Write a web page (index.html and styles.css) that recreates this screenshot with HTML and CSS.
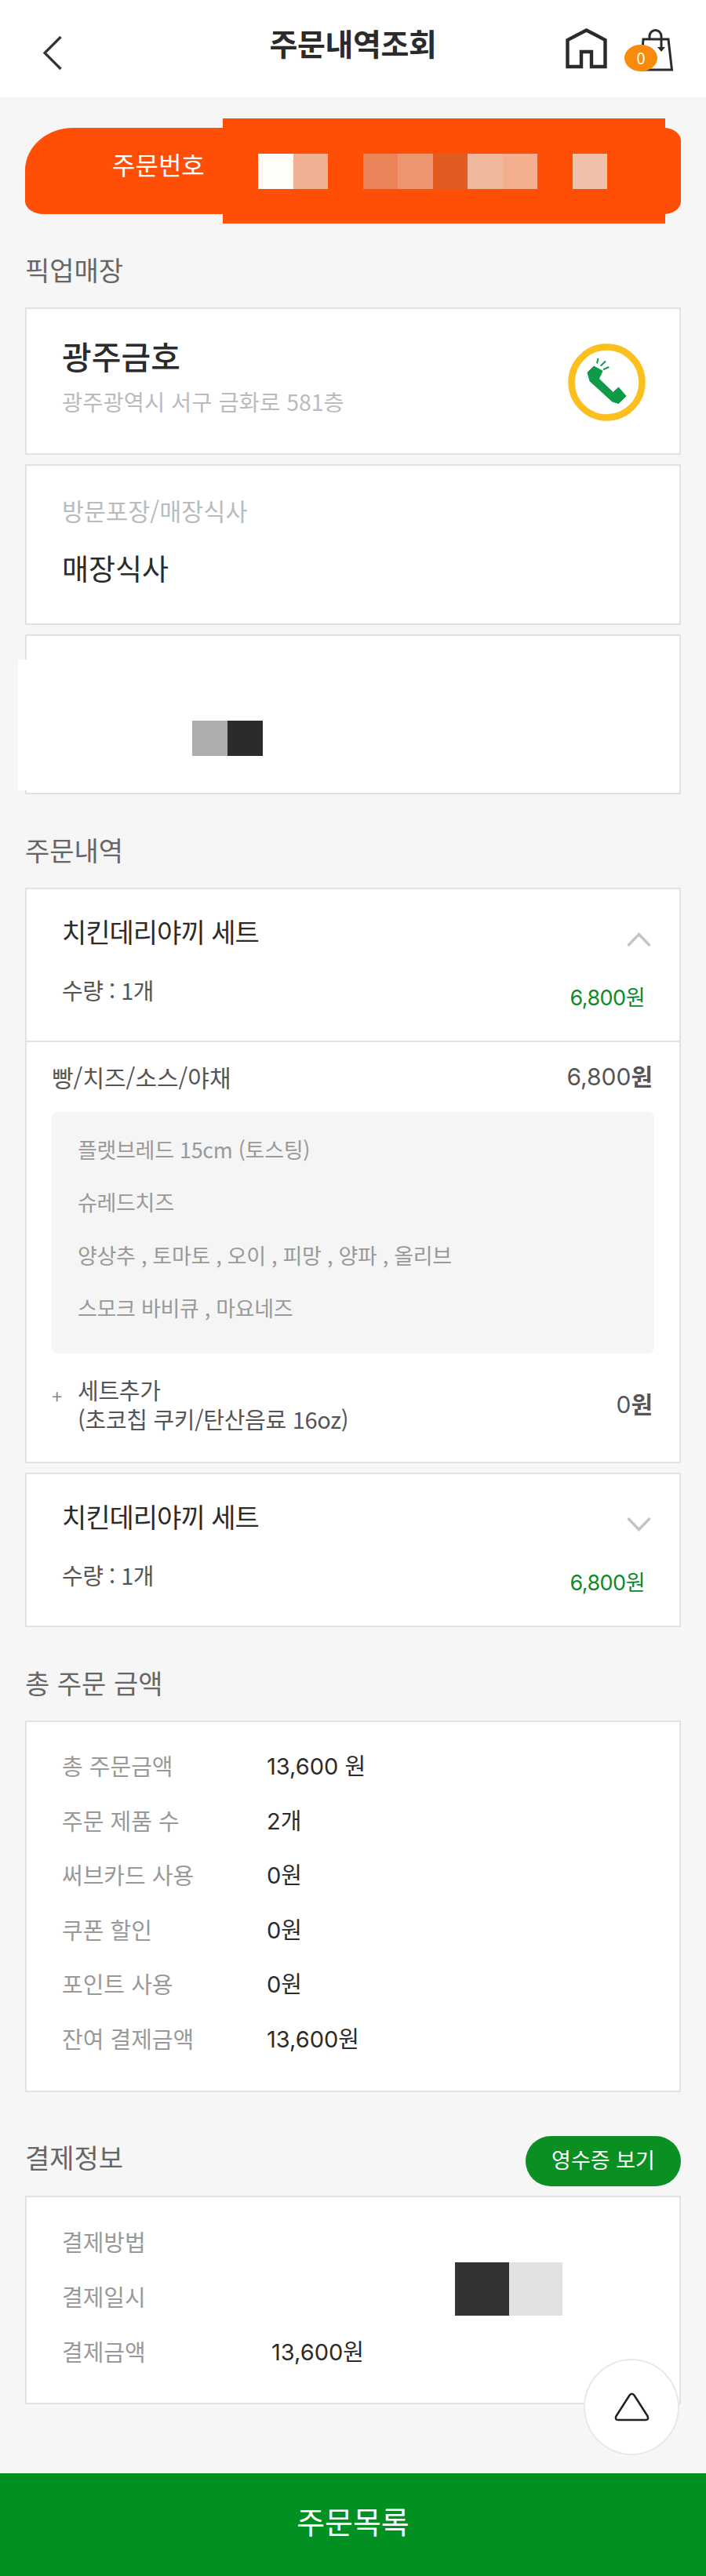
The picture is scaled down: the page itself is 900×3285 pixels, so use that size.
FILE: index.html
```html
<!DOCTYPE html>
<html lang="ko">
<head>
    <meta charset="UTF-8">
    <meta name="viewport" content="width=device-width, initial-scale=1.0">
    <title>주문내역조회</title>
    <link rel="stylesheet" href="styles.css">
</head>
<body>
<div class="page">
    <header class="top-bar">
        <a class="back">
            <svg width="26" height="45" viewBox="0 0 26 45" fill="none" stroke="#333" stroke-width="3.2"><path d="M23.5 2 L3 22.5 L23.5 43"/></svg>
        </a>
        <h1>주문내역조회</h1>
        <div class="top-icons">
            <svg width="53" height="52" viewBox="0 0 53 52" fill="none" stroke="#2b2b2b" stroke-width="4.4"><path d="M2.5 49 V15 L26.5 2.5 L50.5 15 V49 H33 V30 H20 V49 Z"/></svg>
            <div class="cart">
                <svg width="44" height="56" viewBox="0 0 44 56" fill="none" stroke="#2b2b2b" stroke-width="3"><path d="M5 14 H37 L41.500 53 H2 Z"/><path d="M13 14 V10 a7.500 7.500 0 0 1 15 0 V25"/><path d="M23 24 H33 L28 30 Z" fill="#2b2b2b" stroke="none"/></svg>
                <span class="badge">0</span>
            </div>
        </div>
    </header>

    <main class="content">
        <div class="order-no">
            <span class="order-no-label">주문번호</span>
            <div class="mask">
                <i class="c1"></i><i class="c2"></i><i></i><i class="c3"></i><i class="c4"></i><i class="c5"></i><i class="c6"></i><i class="c7"></i><i></i><i class="c8"></i>
            </div>
        </div>

        <h2>픽업매장</h2>
        <section class="card store">
            <div class="store-info">
                <div class="store-name">광주금호</div>
                <div class="store-addr">광주광역시 서구 금화로 581층</div>
            </div>
            <svg class="phone" width="99" height="99" viewBox="0 0 99 99">
                <circle cx="49.500" cy="49.500" r="45" fill="#fff" stroke="#fbbf1f" stroke-width="8.500"/>
                <path d="M25 37 L33 29 L44 35 L39.500 45 L57.500 62.500 L64.500 56 L74 67 L64.500 76.500 L56.500 74 L28 48 Z" fill="#0e9a47" stroke="#0e9a47" stroke-width="1" stroke-linejoin="round"/>
                <path d="M37 25.500 L38.500 19 M41.700 28.700 L48 22.500 M45 33.300 L52.300 30" stroke="#0e9a47" stroke-width="2" fill="none"/>
            </svg>
        </section>
        <section class="card visit">
            <div class="visit-label">방문포장/매장식사</div>
            <div class="visit-value">매장식사</div>
        </section>
        <section class="card hidden-info">
            <div class="patch"><i class="g1"></i><i class="g2"></i></div>
        </section>

        <h2>주문내역</h2>
        <section class="card item">
            <div class="item-head">
                <div class="item-title">
                    <span>치킨데리야끼 세트</span>
                    <svg class="chev" width="31" height="18" viewBox="0 0 31 18" fill="none" stroke="#c4c4c4" stroke-width="3.4"><path d="M1.500 17 L15.500 2.500 L29.500 17"/></svg>
                </div>
                <div class="item-qty">
                    <span>수량 : 1개</span>
                    <span class="item-price">6,800원</span>
                </div>
            </div>
            <div class="item-detail">
                <div class="detail-row">
                    <span>빵/치즈/소스/야채</span>
                    <span class="num">6,800<b>원</b></span>
                </div>
                <ul class="options">
                    <li>플랫브레드 15cm (토스팅)</li>
                    <li>슈레드치즈</li>
                    <li>양상추 , 토마토 , 오이 , 피망 , 양파 , 올리브</li>
                    <li>스모크 바비큐 , 마요네즈</li>
                </ul>
                <div class="extra-row">
                    <span class="plus">+</span>
                    <span class="extra-name">세트추가<br>(초코칩 쿠키/탄산음료 16oz)</span>
                    <span class="extra-price num">0<b>원</b></span>
                </div>
            </div>
        </section>
        <section class="card item">
            <div class="item-head">
                <div class="item-title">
                    <span>치킨데리야끼 세트</span>
                    <svg class="chev" width="31" height="18" viewBox="0 0 31 18" fill="none" stroke="#c4c4c4" stroke-width="3.4"><path d="M1.500 1 L15.500 15.500 L29.500 1"/></svg>
                </div>
                <div class="item-qty">
                    <span>수량 : 1개</span>
                    <span class="item-price">6,800원</span>
                </div>
            </div>
        </section>

        <h2>총 주문 금액</h2>
        <section class="card totals">
            <div class="t-row"><span>총 주문금액</span><b>13,600 원</b></div>
            <div class="t-row"><span>주문 제품 수</span><b>2개</b></div>
            <div class="t-row"><span>써브카드 사용</span><b>0원</b></div>
            <div class="t-row"><span>쿠폰 할인</span><b>0원</b></div>
            <div class="t-row"><span>포인트 사용</span><b>0원</b></div>
            <div class="t-row"><span>잔여 결제금액</span><b>13,600원</b></div>
        </section>

        <div class="pay-head">
            <h2>결제정보</h2>
            <a class="receipt">영수증 보기</a>
        </div>
        <section class="card pay">
            <div class="p-row"><span>결제방법</span></div>
            <div class="p-row"><span>결제일시</span></div>
            <div class="p-row"><span>결제금액</span><b>13,600원</b></div>
            <div class="pay-mask"><i class="d1"></i><i class="d2"></i></div>
        </section>
    </main>

    <a class="to-top">
        <svg width="45" height="37" viewBox="0 0 45 37" fill="none" stroke="#222" stroke-width="2.6"><path d="M19.500 3.500 Q22.500 0 25.500 3.500 L42.500 30 Q44.500 35 40 35 H5 Q0.500 35 2.500 30 Z"/></svg>
    </a>
    <a class="bottom-btn">주문목록</a>
</div>
</body>
</html>
```

FILE: styles.css
```css
* {
    box-sizing: border-box;
}
body {
    margin: 0;
    font-family: "Noto Sans CJK KR", "Noto Sans", sans-serif;
    background: #f6f6f6;
    color: #2b2b2b;
}
h1, h2, ul {
    margin: 0;
    padding: 0;
    font-weight: 400;
}
b {
    font-weight: 400;
}
.num, .t-row b, .p-row b {
    font-family: Inter, "Noto Sans CJK KR", sans-serif;
}
.t-row b, .p-row b {
    margin: 2px 0 -2px;
}
.page {
    position: relative;
    width: 900px;
    height: 3285px;
    overflow: hidden;
}

/* top bar */
.top-bar {
    display: grid;
    grid-template-columns: 1fr auto 1fr;
    align-items: center;
    height: 124px;
    background: #fff;
}
.back {
    display: block;
    height: 45px;
    margin: 10px 0 0 54px;
}
.top-bar h1 {
    font-size: 39px;
    font-weight: 700;
    letter-spacing: -0.4px;
    line-height: 50px;
    margin-top: -16px;
}
.top-icons {
    display: flex;
    justify-content: flex-end;
    align-items: flex-start;
    gap: 41px;
    padding-right: 41px;
    margin-top: 3px;
}
.cart {
    position: relative;
    height: 56px;
}
.badge {
    position: absolute;
    left: -19px;
    top: 21px;
    width: 42px;
    height: 34px;
    border-radius: 50%;
    background: #f98b0b;
    color: #fff;
    font-size: 20px;
    line-height: 33px;
    text-align: center;
}

.content {
    padding: 0 32px;
}

/* order number */
.order-no {
    display: flex;
    align-items: center;
    height: 110px;
    margin-top: 39px;
    background: #ff4f07;
    border-radius: 62px 22px 22px 24px / 54px 16px 16px 16px;
}
.order-no-label {
    width: 252px;
    padding: 0 0 18px 111px;
    color: #fff;
    font-size: 32px;
    white-space: nowrap;
}
.mask {
    display: flex;
    align-items: center;
    width: 564px;
    height: 134px;
    padding-left: 45px;
    background: #ff4f07;
}
.mask i {
    width: 44.5px;
    height: 45px;
}
.c1 { background: #fffdf9; }
.c2 { background: #f0b092; }
.c3 { background: #ec8459; }
.c4 { background: #ec9670; }
.c5 { background: #e25c22; }
.c6 { background: #efb89c; }
.c7 { background: #f2ae8d; }
.c8 { background: #f0c0a8; }

/* section titles */
h2 {
    margin: 49px 0 26px;
    font-size: 34px;
    line-height: 44px;
    color: #666;
}
.card {
    margin-bottom: 12px;
    background: #fff;
    border: 2px solid #e2e2e2;
}

/* store */
.store {
    display: flex;
    justify-content: space-between;
    align-items: center;
    height: 188px;
    padding: 0 43px 0 45px;
}
.store-info {
    margin-bottom: 12px;
}
.store-name {
    font-size: 41px;
    line-height: 50px;
    font-weight: 500;
}
.store-addr {
    margin-top: 14px;
    font-size: 28.5px;
    line-height: 40px;
    color: #bbb;
}
.phone {
    margin-top: 2px;
}
.visit {
    height: 205px;
    padding: 37px 45px 0;
}
.visit-label {
    font-size: 30.5px;
    line-height: 40px;
    color: #bbb;
}
.visit-value {
    margin-top: 28px;
    font-size: 37px;
    line-height: 50px;
}
.hidden-info {
    position: relative;
    height: 204px;
    margin-bottom: 0;
}
.patch {
    position: absolute;
    left: -11px;
    top: 30px;
    display: flex;
    width: 682px;
    height: 167px;
    padding: 78px 0 0 222px;
    background: #fff;
}
.patch i {
    width: 45px;
    height: 45px;
}
.g1 { background: #adadad; }
.g2 { background: #2b2b2b; }

/* order items */
.item-head {
    padding: 30px 44px 0 45px;
}
.item-title {
    display: flex;
    justify-content: space-between;
    font-size: 34px;
    line-height: 48px;
    letter-spacing: -1px;
}
.chev {
    margin: 25px -8px 0 0;
}
.item-qty {
    display: flex;
    justify-content: space-between;
    margin-top: 30px;
    height: 85px;
    font-size: 29px;
    line-height: 40px;
    letter-spacing: -0.5px;
    color: #555;
}
.item-price {
    margin-top: 11px;
    font-family: Inter, "Noto Sans CJK KR", sans-serif;
    font-size: 27px;
    color: #0b8b2c;
}
.item-detail {
    padding: 24px 32px 36px;
    border-top: 2px solid #e2e2e2;
}
.detail-row {
    display: flex;
    justify-content: space-between;
    font-size: 30px;
    line-height: 40px;
    color: #555;
    padding-right: 2px;
}
.detail-row b, .extra-price b {
    font-family: "Noto Sans CJK KR", sans-serif;
    font-weight: 700;
    line-height: 1;
}
.options {
    list-style: none;
    height: 308px;
    margin-top: 25px;
    padding: 28px 33px 0;
    background: #f5f5f5;
    border-radius: 8px;
    font-size: 27px;
    line-height: 40px;
    letter-spacing: -0.3px;
    color: #999;
}
.options li + li {
    margin-top: 27.4px;
}
.extra-row {
    display: flex;
    align-items: center;
    margin-top: 28px;
    font-size: 29px;
    line-height: 37px;
    letter-spacing: -0.3px;
    color: #555;
}
.plus {
    width: 33px;
    font-size: 24px;
    color: #888;
    margin-top: -24px;
}
.extra-name {
    flex: 1;
}
.extra-price {
    font-size: 30px;
    padding-right: 2px;
    letter-spacing: 0;
}

/* totals */
.totals {
    height: 474px;
    margin-bottom: 0;
    padding: 35px 45px 0;
}
.t-row, .p-row {
    display: flex;
    font-size: 29px;
    line-height: 40px;
}
.t-row + .t-row {
    margin-top: 29.6px;
}
.t-row span {
    width: 261px;
    color: #999;
}
.pay-head {
    display: flex;
    justify-content: space-between;
    align-items: flex-start;
    height: 64px;
    margin: 56px 0 12px;
}
.pay-head h2 {
    margin: 5px 0 0;
}
.receipt {
    width: 198px;
    height: 64px;
    border-radius: 32px;
    background: #0a9022;
    color: #fff;
    font-size: 27px;
    line-height: 60px;
    text-align: center;
}
.pay {
    position: relative;
    height: 266px;
    margin-bottom: 0;
    padding: 36px 45px 0;
}
.p-row + .p-row {
    margin-top: 30px;
}
.p-row span {
    width: 267px;
    color: #999;
}
.pay-mask {
    position: absolute;
    left: 546px;
    top: 83px;
    display: flex;
}
.pay-mask i {
    width: 68.5px;
    height: 68px;
}
.d1 { background: #333; }
.d2 { background: #e2e2e2; }

/* floating and bottom */
.to-top {
    position: absolute;
    left: 744px;
    top: 3008px;
    display: flex;
    justify-content: center;
    align-items: center;
    width: 122px;
    height: 123px;
    background: #fff;
    border: 2px solid #e8e8e8;
    border-radius: 50%;
}
.bottom-btn {
    position: absolute;
    left: 0;
    right: 0;
    bottom: 0;
    height: 131px;
    background: #039022;
    color: #fff;
    font-size: 39px;
    line-height: 120px;
    text-align: center;
}
```
